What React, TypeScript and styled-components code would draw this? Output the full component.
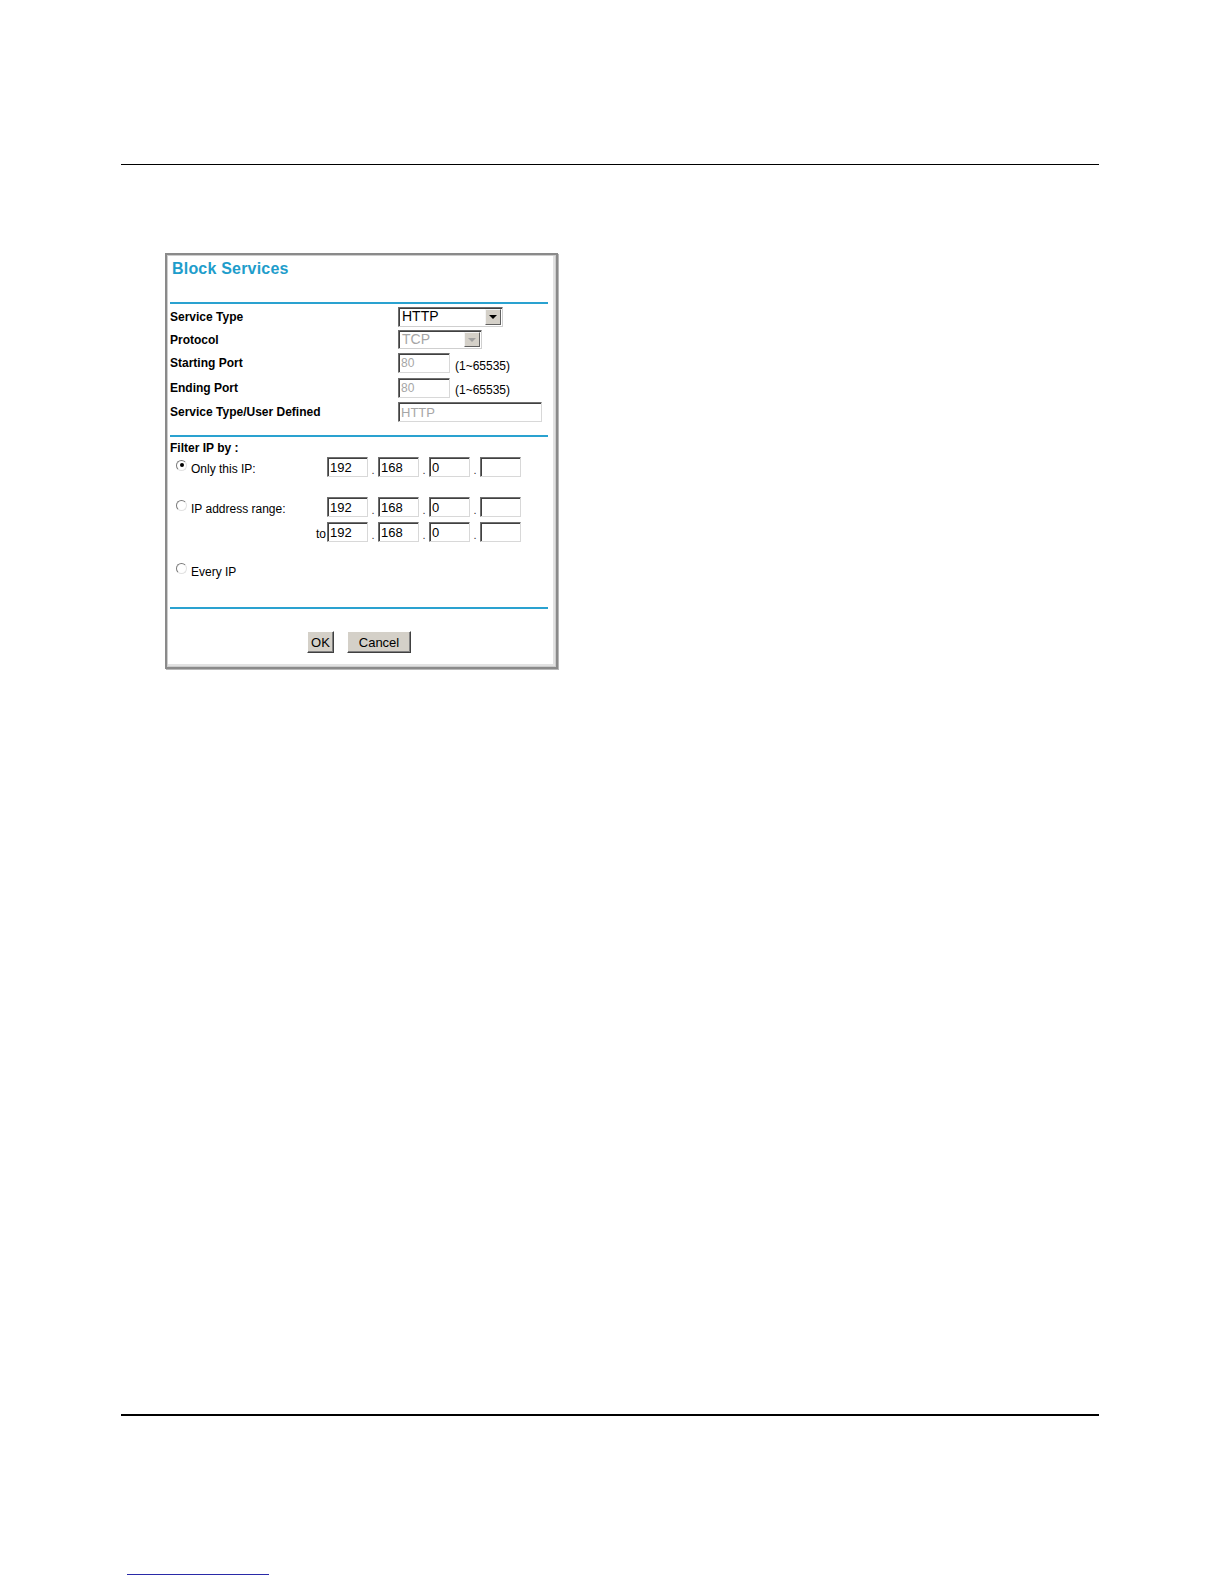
import React from "react";
import styled, { createGlobalStyle } from "styled-components";

const Global = createGlobalStyle`
  html, body { margin: 0; padding: 0; background: #ffffff; }
  body { font-family: "Liberation Sans", Arial, sans-serif; color: #000; }
`;

const Page = styled.div`
  width: 1224px;
  min-height: 1584px;
  box-sizing: border-box;
  padding: 164px 125px 0 121px;
  display: flex;
  flex-direction: column;
`;

const TopRule = styled.div`
  height: 1px;
  background: #000;
`;

const BottomRule = styled.div`
  height: 2px;
  background: #000;
  margin-top: 745px;
`;

const FooterLink = styled.div`
  width: 142px;
  height: 1px;
  margin: 158px 0 0 6px;
  background: #2a2aa8;
`;

const Panel = styled.div`
  margin: 88px 0 0 44px;
  width: 393px;
  height: 416px;
  box-sizing: border-box;
  border: 2px solid #8a8a8a;
  box-shadow: inset 0 0 0 1px #cdcdcd, inset -2px -2px 0 1px #e2e2e2, 1px 1px 0 #b8b8b8;
  padding: 0 8px 0 3px;
  display: flex;
  flex-direction: column;
  background: #fff;
`;

const Header = styled.div`
  height: 47px;
  box-sizing: border-box;
  padding: 5px 0 0 2px;
`;

const Title = styled.h1`
  margin: 0;
  font-size: 16px;
  letter-spacing: 0.2px;
  line-height: 18px;
  font-weight: bold;
  color: #1e9dcb;
`;

const Rule = styled.div`
  height: 2px;
  background: #2aa2d0;
`;

const FormSection = styled.div`
  padding: 1px 0 11px;
`;

const Row = styled.div<{ $h: number }>`
  display: flex;
  align-items: center;
  height: ${(p) => p.$h}px;
`;

const Label = styled.div`
  width: 228px;
  font-size: 12px;
  font-weight: bold;
  line-height: 14px;
`;

const SelectBox = styled.div<{ $w: number; $h: number }>`
  display: flex;
  width: ${(p) => p.$w}px;
  height: ${(p) => p.$h}px;
  box-sizing: border-box;
  border-style: solid;
  border-width: 1px;
  border-color: #6e6e6e #cfcfcf #cfcfcf #6e6e6e;
  box-shadow: inset 1px 1px 0 #404040;
  background: #fff;
`;

const SelectText = styled.div<{ $disabled?: boolean }>`
  flex: 1;
  padding-left: 3px;
  font-size: 14px;
  line-height: 17px;
  color: ${(p) => (p.$disabled ? "#a6a6a6" : "#000")};
`;

const ArrowBtn = styled.div<{ $disabled?: boolean }>`
  width: 16px;
  margin: 1px 1px 1px 0;
  box-sizing: border-box;
  background: #d4d0c8;
  border-style: solid;
  border-width: 1px;
  border-color: #f4f4f4 #606060 #606060 #f4f4f4;
  display: flex;
  align-items: center;
  justify-content: center;
  &::after {
    content: "";
    width: 0;
    height: 0;
    border-left: 4px solid transparent;
    border-right: 4px solid transparent;
    border-top: 4px solid ${(p) => (p.$disabled ? "#a0a0a0" : "#000")};
  }
`;

const Field = styled.input<{ $w: number; $size?: number }>`
  width: ${(p) => p.$w}px;
  height: 20px;
  box-sizing: border-box;
  margin: 0;
  padding: 0 0 0 2px;
  border-style: solid;
  border-width: 1px;
  border-color: #707070 #d8d8d8 #d8d8d8 #707070;
  box-shadow: inset 1px 1px 0 #404040;
  font-family: "Liberation Sans", Arial, sans-serif;
  font-size: ${(p) => p.$size ?? 13}px;
  color: #000;
  background: #fff;
  outline: none;
  &:disabled {
    color: #a6a6a6;
    background: #fff;
  }
`;

const Hint = styled.span`
  margin-left: 5px;
  padding-top: 5px;
  font-size: 12px;
`;

const FilterSection = styled.div`
  padding: 4px 0 26px;
`;

const FilterTitle = styled.div`
  font-size: 12px;
  font-weight: bold;
  line-height: 14px;
`;

const IpRow = styled.div<{ $gap: number }>`
  display: flex;
  align-items: center;
  height: 22px;
  margin-top: ${(p) => p.$gap}px;
`;

const IpLead = styled.div<{ $right?: boolean }>`
  width: 157px;
  box-sizing: border-box;
  display: flex;
  align-items: center;
  justify-content: ${(p) => (p.$right ? "flex-end" : "flex-start")};
  padding: ${(p) => (p.$right ? "4px 1px 0 0" : "0 0 0 6px")};
  font-size: 12px;
`;

const Radio = styled.span<{ $checked?: boolean }>`
  width: 11px;
  height: 11px;
  box-sizing: border-box;
  border-radius: 50%;
  border: 1px solid;
  border-color: #7a7a7a #e2e2e2 #e2e2e2 #7a7a7a;
  background: #fff;
  display: inline-flex;
  align-items: center;
  justify-content: center;
  margin-top: -4px;
  &::after {
    content: "";
    width: 4px;
    height: 4px;
    border-radius: 50%;
    background: ${(p) => (p.$checked ? "#000" : "transparent")};
  }
`;

const RadioLabel = styled.span`
  margin-left: 4px;
  font-size: 12px;
  padding-top: 3px;
`;

const Dot = styled.span`
  width: 10px;
  align-self: flex-end;
  text-align: center;
  font-size: 11px;
  line-height: 16px;
  color: #333;
`;

const ButtonBar = styled.div`
  display: flex;
  justify-content: center;
  gap: 13px;
  margin-top: 22px;
`;

const Button = styled.button<{ $w: number }>`
  width: ${(p) => p.$w}px;
  height: 22px;
  margin: 0;
  padding: 0;
  box-sizing: border-box;
  background: #d4d0c8;
  border-style: solid;
  border-width: 1px;
  border-color: #ffffff #404040 #404040 #ffffff;
  box-shadow: inset -1px -1px 0 #808080;
  font-family: "Liberation Sans", Arial, sans-serif;
  font-size: 13px;
  color: #000;
`;

const IpFields: React.FC<{ values: string[] }> = ({ values }) => (
  <>
    {values.map((v, i) => (
      <React.Fragment key={i}>
        <Field $w={41} defaultValue={v} readOnly />
        {i < values.length - 1 && <Dot>.</Dot>}
      </React.Fragment>
    ))}
  </>
);

export default function App() {
  const ip = ["192", "168", "0", ""];
  return (
    <>
      <Global />
      <Page>
        <TopRule />
        <Panel>
          <Header>
            <Title>Block Services</Title>
          </Header>
          <Rule />
          <FormSection>
            <Row $h={23}>
              <Label>Service Type</Label>
              <SelectBox $w={105} $h={20}>
                <SelectText>HTTP</SelectText>
                <ArrowBtn />
              </SelectBox>
            </Row>
            <Row $h={23}>
              <Label>Protocol</Label>
              <SelectBox $w={84} $h={19}>
                <SelectText $disabled>TCP</SelectText>
                <ArrowBtn $disabled />
              </SelectBox>
            </Row>
            <Row $h={24}>
              <Label>Starting Port</Label>
              <Field $w={52} $size={12} defaultValue="80" disabled />
              <Hint>(1~65535)</Hint>
            </Row>
            <Row $h={25}>
              <Label>Ending Port</Label>
              <Field $w={52} $size={12} defaultValue="80" disabled />
              <Hint>(1~65535)</Hint>
            </Row>
            <Row $h={24}>
              <Label>Service Type/User Defined</Label>
              <Field $w={144} $size={13} defaultValue="HTTP" disabled />
            </Row>
          </FormSection>
          <Rule />
          <FilterSection>
            <FilterTitle>Filter IP by :</FilterTitle>
            <IpRow $gap={1}>
              <IpLead>
                <Radio $checked />
                <RadioLabel>Only this IP:</RadioLabel>
              </IpLead>
              <IpFields values={ip} />
            </IpRow>
            <IpRow $gap={18}>
              <IpLead>
                <Radio />
                <RadioLabel>IP address range:</RadioLabel>
              </IpLead>
              <IpFields values={ip} />
            </IpRow>
            <IpRow $gap={3}>
              <IpLead $right>to</IpLead>
              <IpFields values={ip} />
            </IpRow>
            <IpRow $gap={16}>
              <IpLead>
                <Radio />
                <RadioLabel>Every IP</RadioLabel>
              </IpLead>
            </IpRow>
          </FilterSection>
          <Rule />
          <ButtonBar>
            <Button $w={27}>OK</Button>
            <Button $w={64}>Cancel</Button>
          </ButtonBar>
        </Panel>
        <BottomRule />
        <FooterLink />
      </Page>
    </>
  );
}
